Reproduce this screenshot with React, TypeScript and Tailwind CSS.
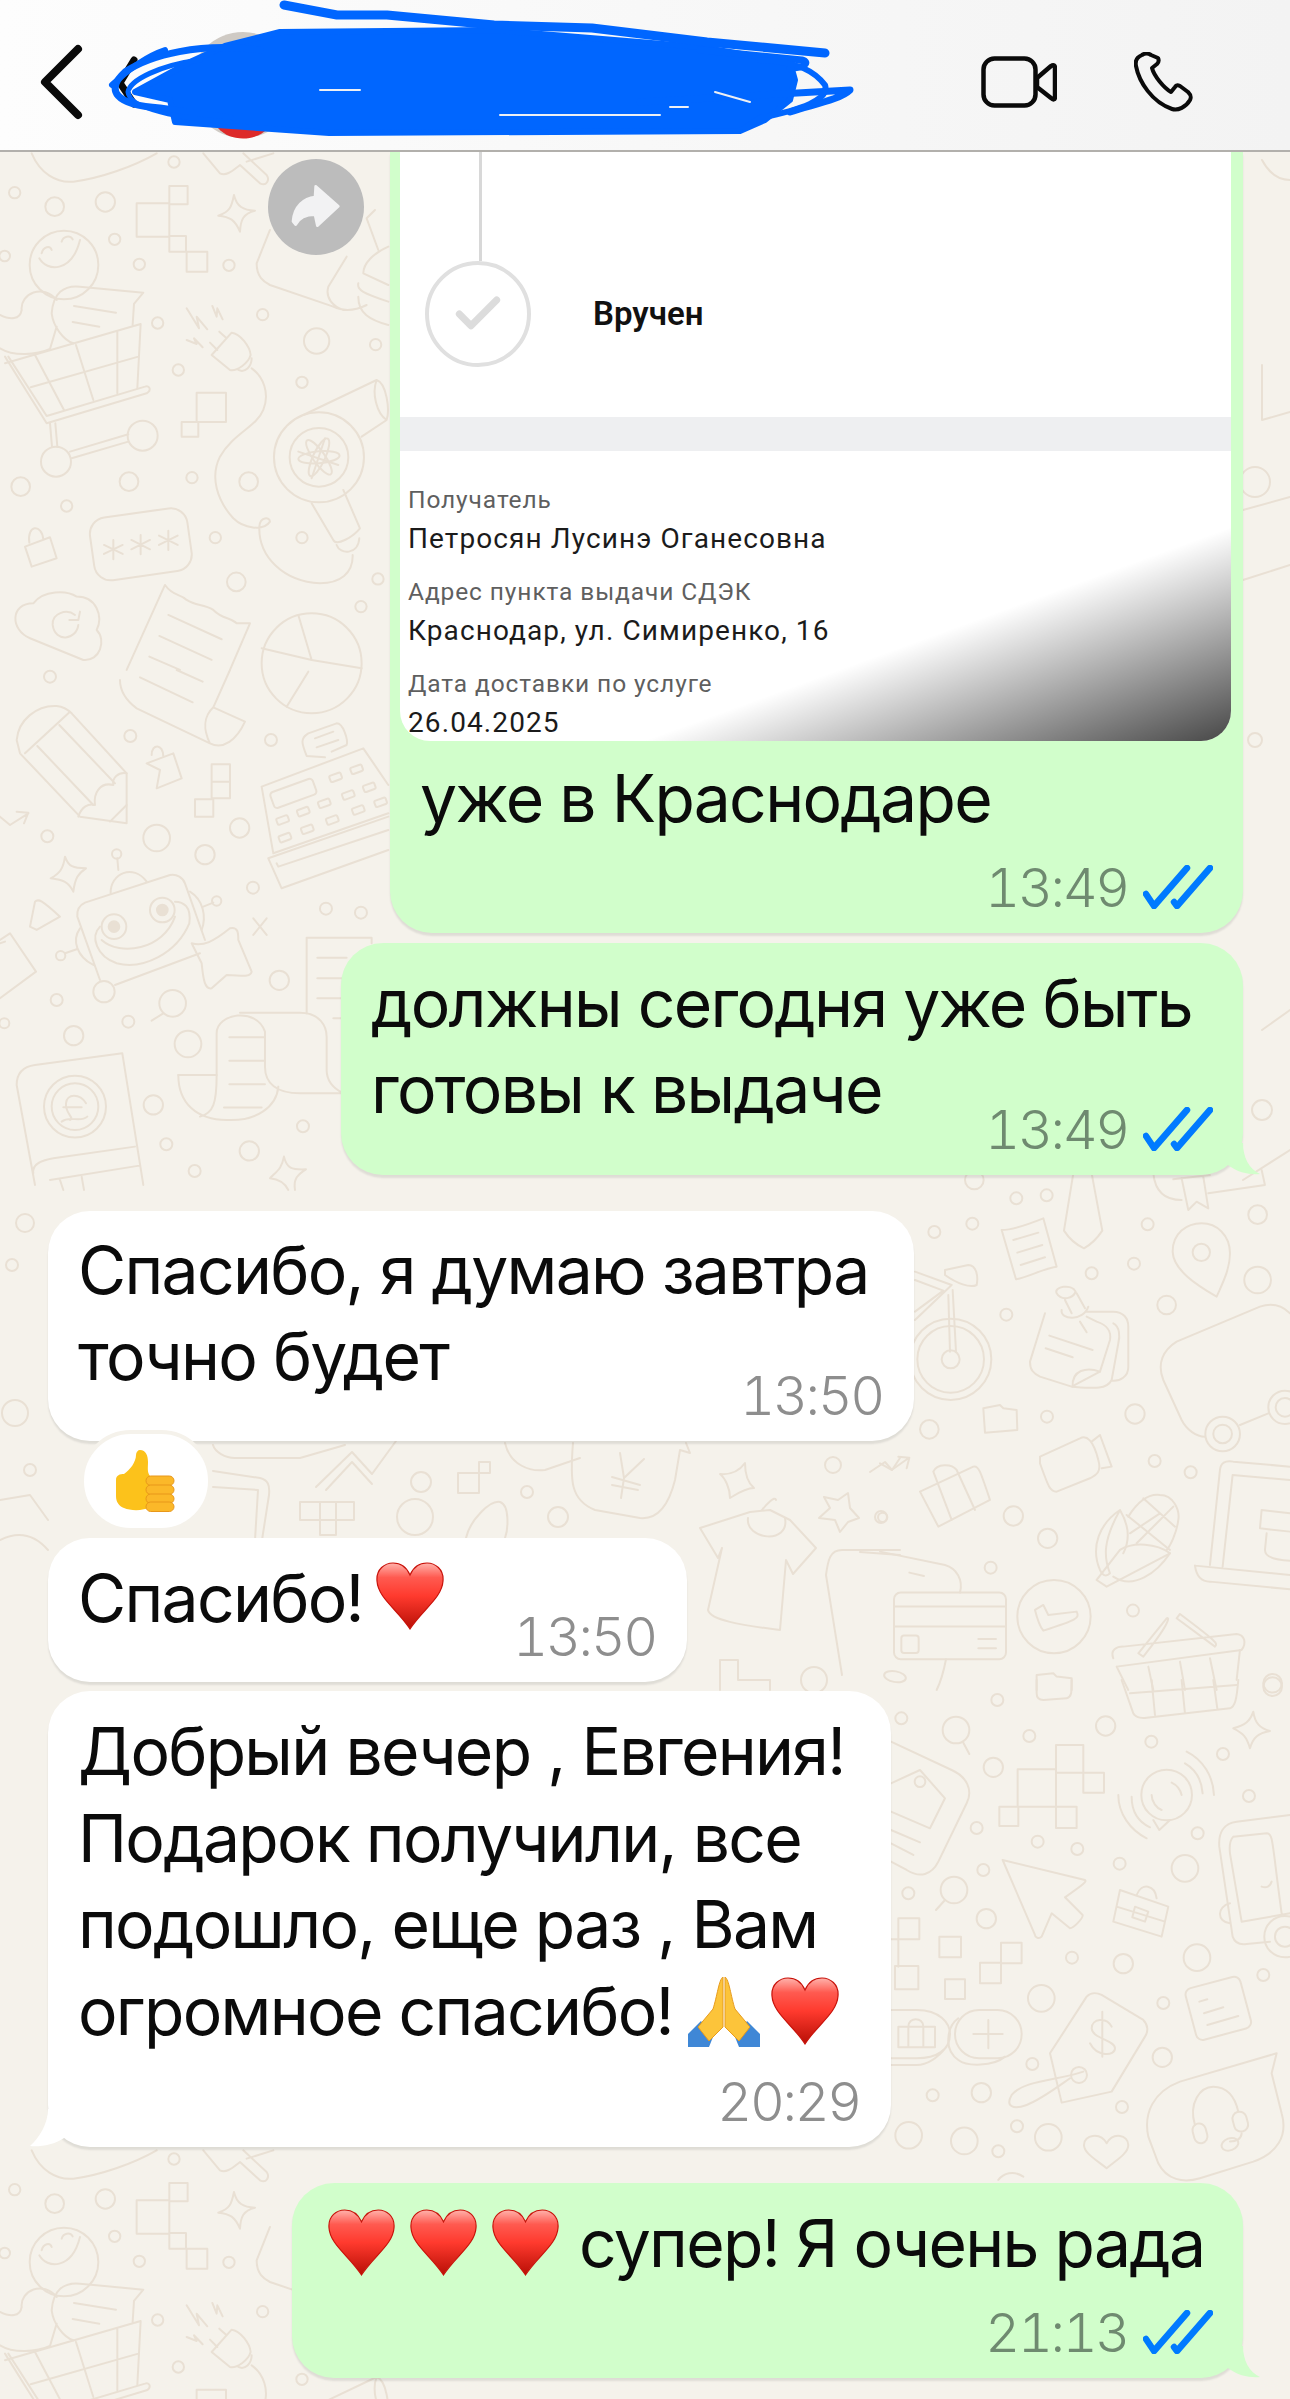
import { Check } from "lucide-react";
import type { ReactNode } from "react";

const GREEN = "bg-[#d1fecb]";

// wallpaper pieces are written in zoomed (3x) coordinates, hence the scale on each group
function Doodles({
  x,
  y,
  circles,
  paths,
  children,
}: {
  x: number;
  y: number;
  circles: number[][];
  paths: string[];
  children?: ReactNode;
}) {
  return (
    <g transform={`translate(${x} ${y}) scale(0.3333)`} strokeWidth={6}>
      {circles.map(([cx, cy, r]) => (
        <circle key={`${cx}-${cy}`} cx={cx} cy={cy} r={r} />
      ))}
      {paths.map((d) => (
        <path key={d} d={d} />
      ))}
      {children}
    </g>
  );
}

function Wallpaper() {
  return (
    <svg
      className="absolute inset-0"
      width={1290}
      height={2399}
      viewBox="0 0 1290 2399"
      fill="none"
      stroke="#e9e0d4"
      strokeLinecap="round"
      strokeLinejoin="round"
    >
      <g id="tile-top">
        <Doodles
          x={0}
          y={150}
          circles={[
            [44, 128, 17], [164, 170, 28], [316, 156, 29], [344, 268, 17], [418, 343, 17], [522, 36, 17],
            [687, 346, 17], [473, 519, 17], [788, 494, 17], [950, 573, 38], [1127, 584, 17], [535, 660, 17],
            [906, 697, 17], [62, 1010, 28], [387, 995, 28], [576, 983, 17], [746, 995, 28], [200, 1068, 17],
            [646, 1163, 17], [906, 1163, 17], [709, 1296, 28], [1134, 1287, 17], [1083, 1370, 17], [14, 318, 16],
            [192, 345, 103], [168, 935, 45], [428, 857, 45], [957, 922, 135], [957, 922, 88], [935, 1540, 150],
          ]}
          paths={[
            "M410 160H508V260H410Z M508 108H563V163H508Z M508 258H558V305H508Z M560 305H622V365H560Z",
            "M702 135 C710 170 730 180 765 182 C730 190 722 210 720 245 C705 210 690 200 655 197 C690 185 695 170 702 135Z",
            "M118 325 C140 365 215 370 240 270 M125 310 C130 290 150 285 155 300 M185 275 C190 258 210 255 218 268",
            "M0 495 C30 510 60 510 65 480 C60 430 130 400 170 450",
            "M155 490 C160 430 190 405 240 410 L430 428 L402 462 L398 525 M155 490 C160 530 190 570 220 580 M170 530 L150 597 C110 615 40 620 0 595",
            "M222 468 L348 488 M218 516 L298 530",
            "M15 640 L422 522 L412 715 M92 712 L415 620 M105 615 L192 780 M228 585 L280 750 M352 545 L352 730",
            "M15 620 L140 820 L440 730 C455 722 450 705 435 710 L140 798 L25 620",
            "M150 820 L156 890 M166 820 L172 890 M210 905 L385 853 M215 925 L385 875",
            "M635 615 L695 548 C720 550 750 590 752 615 C745 640 710 665 690 660 Z M630 578 L652 600 M658 545 L680 565 M715 660 C735 670 755 650 755 625",
            "M755 655 C790 680 810 730 790 780 C770 830 700 850 660 920 C630 980 650 1050 700 1105 C730 1135 790 1145 810 1115 C810 1100 780 1100 778 1130 C775 1220 850 1295 960 1300 C1020 1300 1060 1270 1058 1215",
            "M560 475 L597 535 L590 500 L622 538 M637 468 L650 500 L652 475 L668 508 M560 570 L590 582 L582 565 L608 592",
            "M590 728H678V816H590Z M545 816H595V860H545Z",
            "M895 905 L1015 945 M975 865 L935 985",
            "M910 795 L1130 690 C1160 700 1170 780 1160 810 L1085 860 M1130 690 C1115 730 1130 790 1160 810",
            "M935 1060 L1000 1170 C1010 1190 1060 1160 1080 1135 L1030 1020 M1010 1185 C1020 1215 1075 1215 1078 1165",
            "M810 240 L770 340 C770 380 790 395 810 405 L1000 470 C1030 485 1060 485 1100 465 M1125 180 L1100 205 L1135 300 M1040 320 L985 410 C975 445 1000 470 1030 480",
            "M1165 290 C1120 310 1090 340 1090 370 L1165 405 M1075 400 C1070 420 1090 430 1165 455 M1075 440 C1075 490 1110 510 1165 525",
            "M95 10 C120 70 170 100 220 95 C300 85 400 50 470 10 M610 10 L660 70 C680 80 700 60 720 45 L780 100 C800 110 810 90 800 75 L730 10 M820 10 L740 35",
            "M75 1190 L150 1162 L170 1225 L95 1250 Z M88 1178 C80 1125 125 1120 130 1168",
            "M340 1170 V1228 M312 1185 L368 1212 M312 1212 L368 1185 M422 1155 V1213 M394 1170 L450 1198 M394 1198 L450 1170 M505 1142 V1200 M477 1157 L533 1185 M477 1185 L533 1157",
            "M90 1465 C30 1440 30 1360 100 1360 C130 1320 200 1320 230 1340 C290 1340 310 1400 290 1440 C320 1470 300 1535 250 1530 Z M235 1425 C230 1470 165 1480 158 1425 C155 1390 200 1375 225 1395 M240 1385 L235 1410 L208 1410",
            "M495 1305 C520 1340 540 1330 560 1350 C590 1370 610 1360 640 1380 C670 1410 690 1400 710 1420 L750 1420 L690 1560 M495 1305 L380 1560 M505 1395 L665 1468 M478 1458 L635 1530 M448 1520 L540 1560",
            "M785 1495 L935 1530 L895 1395 M935 1530 L1085 1555",
          ]}
        >
          <rect x={275} y={1088} width={295} height={190} rx={50} transform="rotate(-8 422 1183)" />
          <ellipse cx={957} cy={922} rx={18} ry={62} transform="rotate(25 957 922)" />
          <ellipse cx={957} cy={922} rx={18} ry={62} transform="rotate(85 957 922)" />
          <ellipse cx={957} cy={922} rx={18} ry={62} transform="rotate(-35 957 922)" />
        </Doodles>
      </g>
      <use href="#tile-top" y={1997} />

      <Doodles
        x={0}
        y={670}
        circles={[
          [150, 20, 18], [391, 198, 18], [813, 210, 18], [142, 499, 18], [470, 504, 40], [719, 474, 29],
          [615, 554, 29], [759, 653, 18], [350, 552, 14], [978, 716, 18], [1083, 728, 18], [838, 931, 29],
          [170, 990, 18], [385, 1055, 18], [13, 1060, 15], [221, 1097, 29], [564, 1122, 40], [460, 1305, 29],
          [499, 1423, 18], [584, 1503, 18], [748, 1443, 29], [909, 1369, 18], [342, 770, 37], [487, 720, 37],
          [650, 693, 14], [182, 857, 14], [312, 965, 32], [518, 1000, 40], [225, 1310, 93], [225, 1310, 70],
        ]}
        paths={[
          "M360 30 C360 70 390 100 410 115 L630 220 C670 240 710 210 735 155 L640 112 C610 140 610 180 630 220 M690 0 L640 112 M420 22 L578 97 M530 0 L608 35",
          "M925 5 L860 110",
          "M50 210 C55 150 110 105 170 108 C190 110 205 120 215 130 L380 310 L380 460 L240 440 L60 250 Z M75 250 L210 125 M112 228 L280 405 M178 165 L345 340",
          "M235 440 C245 410 265 400 285 405 C280 370 300 335 340 345 C335 325 355 305 380 310 M330 455 L380 405",
          "M0 440 L30 465 L85 430 M50 425 L85 428 L72 460",
          "M440 280 L520 250 L545 325 L470 355 L480 300 Z M455 255 C455 220 490 220 490 260",
          "M635 283H690V385H635Z M635 335H690 M585 388H640V440H585Z",
          "M785 350 L1090 235 L1165 345 M785 350 L820 550 L1165 430 M805 565 L845 655 L1165 540 M805 565 L1165 440 M830 580 L835 590 L1165 480",
          "M975 262 L920 258 C905 220 900 205 925 190 L1010 160 C1030 160 1045 210 1040 225 L995 245 M945 205 L1000 185 M950 232 L1015 210",
          "M232 740 C230 715 240 705 255 698 L510 615 C530 610 550 625 555 640 L615 810 M600 850 L345 945 M300 930 L232 740",
          "M300 770 C270 800 290 860 350 880 C430 900 530 850 568 760 C575 710 550 695 525 695 M305 810 C360 860 490 840 525 740",
          "M332 670 C330 610 400 580 440 635 M355 600 L352 565 M610 710 L640 698 M195 850 L230 838 M570 665 C610 690 620 740 605 780 M240 775 C215 810 230 860 280 885",
          "M575 820 C610 830 640 815 690 775 C715 770 715 790 715 810 L755 905 C750 925 720 915 680 915 L635 955 C615 960 610 930 605 880 Z",
          "M195 560 C205 590 220 595 258 595 C235 610 225 625 220 665 C205 635 190 630 152 625 C180 610 190 595 195 560Z",
          "M90 770 L105 695 C115 685 125 690 180 740 L110 780 Z",
          "M760 745 L800 795 M800 745 L760 795",
          "M0 810 L30 790 L108 905 L0 985 M0 820 L15 815",
          "M490 1030 L455 1052",
          "M920 1030 V803 H1115 V820 M952 863H1040 M952 925H1040 M952 985H1040 M1000 1045H1040",
          "M535 1215 H650 V1090 C650 1030 770 1010 795 1085 V1190 C795 1240 830 1270 900 1270 H1030 M720 1028 H900 C960 1028 980 1070 980 1100 V1200 C980 1240 1010 1260 1030 1270",
          "M535 1215 C535 1300 590 1350 680 1350 C770 1355 830 1310 835 1250 M650 1215 C650 1300 640 1330 600 1340 M688 1102H795 M688 1172H795 M688 1243H795 M672 1313H785",
          "M50 1245 C50 1210 70 1190 105 1185 L367 1150 L430 1545 M105 1545 L50 1245 M100 1510 C95 1480 130 1470 160 1465 L405 1430 M150 1530 L418 1487 M180 1530 L190 1560 M245 1520 L252 1560",
          "M258 1300 C240 1270 200 1270 198 1300 C195 1330 225 1345 210 1350 M190 1312H245 M185 1355 C210 1335 240 1360 262 1340",
          "M852 1460 C860 1495 875 1500 918 1498 C890 1515 880 1530 885 1560 M852 1460 C845 1495 835 1500 810 1525 C840 1528 855 1540 865 1560",
        ]}
      >
        <rect x={812} y={345} width={135} height={50} rx={10} transform="rotate(-20 880 368)" />
        {[[848, 450], [910, 425], [973, 400], [1045, 375], [1108, 352], [1007, 322], [1070, 298], [855, 503], [922, 478], [997, 450], [1075, 420], [1142, 397]].map(([cx, cy]) => (
          <rect key={`${cx}-${cy}`} x={cx - 18} y={cy - 10} width={36} height={20} rx={5} transform={`rotate(-20 ${cx} ${cy})`} />
        ))}
        <circle cx={342} cy={770} r={16} fill="#e9e0d4" />
        <circle cx={487} cy={720} r={16} fill="#e9e0d4" />
      </Doodles>

      <Doodles
        x={880}
        y={1170}
        circles={[
          [283, 30, 28], [409, 85, 18], [500, 76, 18], [163, 186, 18], [277, 161, 18], [803, 163, 18], [1133, 134, 28],
          [635, 310, 18], [762, 281, 18], [379, 434, 18], [860, 405, 28], [1133, 330, 40], [964, 247, 26], [148, 778, 28],
          [501, 740, 18], [765, 732, 29], [824, 873, 18], [932, 907, 18], [400, 1038, 29], [503, 1105, 29], [332, 1193, 18],
          [759, 1322, 18], [8, 1042, 14], [1178, 1540, 28], [212, 568, 122], [212, 568, 100], [212, 568, 27], [1028, 792, 52],
          [1028, 792, 28], [1215, 712, 50], [1215, 712, 28], [522, 1340, 110],
        ]}
        paths={[
          "M365 180 C390 180 440 165 490 145 L530 290 C490 295 450 320 408 328 Z M400 210 L475 188 M412 248 L487 225 M422 285 L495 262",
          "M580 10 L552 182 C570 210 590 225 612 235 C640 220 655 200 667 182 L635 10",
          "M820 10 C825 60 850 90 905 90 M905 25 L925 120 L950 95 L985 115 L970 20 M880 28 L990 15 M985 70 L1155 45 L1145 0",
          "M1010 380 C950 345 880 300 878 245 C878 190 920 160 965 160 C1010 160 1050 195 1050 250 C1050 300 1025 345 1010 380Z",
          "M105 305 L215 345 L105 450 M105 330 L190 362 L105 425 M195 300 L265 285 C290 285 295 320 290 345 C270 355 230 340 195 315Z M205 375 L210 545 M218 360 L228 545",
          "M495 430 L450 575 C450 600 460 610 480 620 L575 650 L660 605 L690 510 C695 480 680 465 650 455 L620 440 M620 425 H700 C730 425 745 445 745 470 V590 C745 620 720 635 695 632 M700 460 C720 470 720 500 715 520 L695 630 C680 660 640 655 575 650",
          "M508 497 L638 540 M497 535 L578 562 M530 370 C520 350 575 340 587 365 C580 385 545 395 530 370Z M555 390 L575 430 M590 370 L615 415 M545 420 C540 450 610 455 625 410 M600 455 L620 487 M578 650 C575 600 620 590 660 605",
          "M310 715 L360 705 L370 715 L410 720 L412 780 L315 788Z",
          "M1230 430 C1200 400 1170 400 1140 410 L890 515 C850 540 830 580 850 630 L905 750 C920 780 950 800 975 800 M1080 765 L1165 730",
          "M480 860 L600 805 C620 795 640 810 655 870 C665 905 650 915 630 925 L530 965 C510 965 505 950 480 880Z M635 815 L660 795 L695 890 L665 895",
          "M120 965 L280 890 C295 885 300 900 330 990 L175 1070 Z M160 905 C170 880 215 880 230 900 L285 1020 M160 905 L215 1050",
          "M650 1230 L680 1250 L870 1150 C830 1120 760 1115 720 1140 L650 1230 Z M745 1040 C770 1000 800 970 840 975 C880 975 900 1020 895 1050 C890 1090 870 1130 860 1140",
          "M740 1035 L870 1140 M790 985 L885 1070 M750 1090 L840 1030 M770 1120 L880 1010 M720 1020 C660 1060 630 1130 660 1200 C670 1220 680 1220 690 1210 C670 1160 670 1110 720 1020 C750 1070 750 1110 730 1150 M700 1220 C760 1260 830 1210 870 1150",
          "M990 1185 L1020 900 C1022 880 1035 870 1060 875 L1230 890 M1028 1190 L1058 915 L1230 930 M945 1187 L1230 1215 M945 1187 C950 1225 970 1235 990 1235 L1230 1258",
          "M1145 1020 L1230 1030 M1145 1020 L1140 1075 L1230 1085 M1160 1090 L1155 1140 C1155 1160 1180 1170 1230 1172",
          "M42 1310H378 M42 1370H378 M295 1407H348 M295 1435H348 M0 1145 L195 1185 C230 1195 250 1230 240 1268 M88 1208 L132 1218 M198 1468 C190 1510 180 1540 170 1560",
          "M465 1320 L490 1305 L505 1335 L590 1325 C600 1345 590 1350 490 1382 C480 1370 470 1340 465 1320Z",
          "M700 1465 C690 1440 710 1430 730 1430 L1070 1392 C1095 1395 1100 1420 1085 1440 L710 1490 M710 1490 L745 1560 M775 1450 L860 1345 C870 1340 870 1360 790 1460 Z M890 1345 L1005 1430 C1015 1420 1010 1415 900 1332 Z",
          "M805 1490 L820 1560 M900 1475 L915 1560 M990 1465 L1010 1560 M1080 1440 L1070 1530",
          "M0 880 L35 900 L85 865 M55 860 L88 863 L80 895 M470 1560 V1515 L520 1510 L530 1520 L575 1525 V1560",
        ]}
      >
        <rect x={42} y={1268} width={336} height={200} rx={20} />
        <rect x={64} y={1397} width={52} height={52} rx={8} />
        <ellipse cx={45} cy={1520} rx={33} ry={16} transform="rotate(10 45 1520)" />
      </Doodles>

      <Doodles
        x={880}
        y={1680}
        circles={[
          [352, 60, 18], [64, 115, 18], [677, 138, 29], [448, 168, 18], [814, 185, 18], [1178, 20, 28], [1029, 222, 18],
          [340, 262, 29], [1107, 348, 18], [290, 444, 18], [953, 460, 18], [473, 485, 18], [592, 507, 18], [915, 565, 40],
          [310, 570, 18], [719, 551, 18], [85, 640, 18], [319, 716, 29], [576, 833, 18], [730, 851, 29], [951, 833, 40],
          [1150, 885, 18], [484, 955, 40], [850, 969, 18], [847, 1132, 29], [457, 1152, 18], [158, 1246, 18], [304, 1238, 29],
          [726, 1281, 18], [411, 1339, 18], [253, 1383, 40], [505, 1372, 40], [355, 1414, 18], [86, 1366, 40], [228, 150, 40],
          [222, 630, 40], [860, 345, 76], [597, 1185, 24], [1215, 770, 62], [1215, 770, 30], [120, 305, 16],
        ]}
        paths={[
          "M725 0 L760 100 C770 115 790 115 800 113 L1050 85 C1065 80 1070 60 1075 0 M750 40 L1070 15 M815 0 L825 105 M905 0 L915 100 M1000 0 L1012 85",
          "M470 0 V40 C470 55 480 60 490 60 L560 55 C575 50 575 40 575 0",
          "M250 188 L268 222 M195 660 L168 690",
          "M33 185 L215 270 C260 290 280 330 260 370 L175 545 C155 585 120 595 80 570 L33 545 M33 310 L120 270 L195 355 L150 445 L33 395 M33 450 L120 487 M33 490 L100 525",
          "M413 268H528V380H413Z M528 195H610V278H528Z M610 278H672V338H610Z M358 380H415V438H358Z M528 380H590V444H528Z",
          "M820 420 L838 450 L870 420 M920 215 C970 240 1000 290 1002 345 M915 250 C950 270 965 300 968 340 M715 345 C715 400 750 450 800 475 M755 350 C755 395 775 425 810 442 M815 345 C815 365 830 385 845 390 M905 345 C900 325 890 315 875 308",
          "M1120 95 C1125 130 1140 145 1170 153 C1135 160 1120 170 1110 205 C1100 170 1090 160 1060 145 C1095 135 1110 125 1120 95Z",
          "M368 540 L615 600 C620 605 615 610 555 652 L608 705 C610 715 580 745 570 745 L515 700 L485 770 C475 780 465 770 465 765Z",
          "M720 630 L865 680 L845 770 L700 725Z M770 645 C785 605 825 615 830 655 M710 680 L855 725 M765 680 L805 695 L795 725 L757 712Z",
          "M1230 405 L1070 425 C1030 430 1015 460 1018 500 L1058 770 C1065 790 1080 795 1100 792 L1170 785 M1060 470 L1160 460 C1180 460 1175 480 1205 700 M1060 470 C1050 480 1048 500 1050 520 L1085 725 L1230 700 M1145 620 C1160 625 1170 620 1175 605 M1050 670 C1010 680 1010 725 1050 730",
          "M55 715H118V778H55Z M33 778H55 M55 778 V860 M45 858H115V928H45Z M178 770H243V832H178Z M300 848H363V910H300Z M363 788H425V850H363Z M195 898H255V957H195Z",
          "M235 1015 C200 1040 190 1110 235 1140 C260 1160 340 1160 375 1130 M280 1062H368 M325 1020V1105",
          "M33 990 H110 C180 990 210 1030 210 1062 C210 1110 170 1135 110 1135 H33 M33 1155 H110 C150 1155 180 1125 200 1100 M55 1040H165V1102H55Z M85 1040V1102 M130 1040V1102 M85 1040 C85 1010 130 1010 130 1040",
          "M510 1120 L620 950 C635 935 655 940 665 945 L790 1020 C805 1035 805 1055 795 1070 L695 1235 L545 1268 Z",
          "M610 1175 C540 1200 430 1200 395 1245 C375 1280 400 1290 440 1275 C480 1260 520 1230 570 1195",
          "M695 1040 C680 1010 635 1015 635 1045 C635 1075 705 1080 705 1105 C705 1130 650 1130 630 1090 M667 995 V1130",
          "M958 965 L982 958 M972 1000 L1030 982 M982 1035 L1075 1008",
          "M1190 1120 L900 1205 C820 1235 790 1300 805 1370 L835 1450 C860 1500 910 1510 960 1495 L1120 1445 C1190 1420 1225 1370 1205 1300 L1175 1180 L1190 1120Z",
          "M945 1335 C925 1270 960 1220 1000 1220 C1040 1220 1065 1250 1075 1295 M1085 1360 C1085 1375 1070 1385 1050 1385",
          "M680 1465 C650 1440 612 1420 612 1395 C612 1365 660 1355 680 1390 C700 1355 745 1365 745 1395 C745 1420 710 1440 680 1465Z",
          "M355 1500 C370 1480 400 1470 430 1490",
        ]}
      >
        <rect x={225} y={990} width={200} height={145} rx={72} />
        <rect x={930} y={905} width={170} height={160} rx={20} transform="rotate(-15 1015 985)" />
        <rect x={940} y={1330} width={40} height={60} rx={20} transform="rotate(-15 960 1360)" />
        <rect x={1060} y={1295} width={42} height={60} rx={20} transform="rotate(-15 1081 1325)" />
        <ellipse cx={1050} cy={1393} rx={26} ry={18} transform="rotate(-20 1050 1393)" />
      </Doodles>

      {/* strip between the white bubbles, real coordinates */}
      <g strokeWidth={2}>
        <circle cx={421} cy={1482} r={10} />
        <circle cx={527} cy={1492} r={6} />
        <circle cx={415} cy={1517} r={18} />
        <circle cx={558} cy={1517} r={10} />
        <circle cx={833} cy={1465} r={8} />
        <circle cx={881} cy={1517} r={6} />
        <circle cx={814} cy={1680} r={13} />
        <circle cx={25} cy={1223} r={9} />
        <circle cx={12} cy={1265} r={6} />
        <circle cx={15} cy={1413} r={13} />
        <circle cx={30} cy={1470} r={6} />
        <circle cx={1255} cy={482} r={15} />
        <circle cx={1255} cy={740} r={7} />
        <circle cx={1262} cy={1110} r={10} />
        <path d="M213 1445 C215 1452 225 1458 235 1458 L300 1458 L345 1445" />
        <path d="M316 1487 L352 1452 L372 1474 L396 1441 M326 1490 L352 1462 L372 1484" />
        <path d="M458 1473H479V1493H458Z M479 1462H490V1473H479Z" />
        <path d="M300 1502H354V1520H300Z M320 1502V1535H336V1502" />
        <path d="M466 1538 C470 1520 490 1500 500 1502 C510 1505 508 1530 505 1538" />
        <path d="M573 1443 C570 1480 570 1500 595 1510 L640 1518 C660 1520 670 1500 675 1480 L680 1450 L690 1453 L686 1443" />
        <path d="M620 1453 L624 1478 L644 1459 M612 1477 L640 1485 M612 1485 L638 1490 M624 1478 L621 1498" />
        <path d="M505 1443 C510 1465 530 1472 545 1470 L580 1458" />
        <path d="M745 1463 C745 1475 748 1483 754 1488 C745 1488 735 1495 730 1498 C730 1488 725 1478 720 1474 C732 1475 740 1470 745 1463Z" />
        <path d="M870 1472 L885 1462 L892 1470 L900 1458" />
        <path d="M824 1497 L838 1500 L848 1493 L850 1508 L859 1518 L848 1522 L840 1532 L835 1520 L819 1518 L830 1508 Z" />
        <path d="M700 1528 L718 1558 L722 1548 L708 1610 C710 1620 740 1625 780 1630 L786 1560 L793 1574 L816 1548 L790 1520 L770 1510 L750 1512 Z" />
        <path d="M748 1518 C745 1540 790 1545 785 1518 M762 1510 C766 1505 775 1495 776 1500" />
        <path d="M900 1550 L842 1550 C830 1550 828 1560 826 1575 L842 1675 M900 1555 L860 1552" />
        <path d="M720 1690V1660H738V1680H770V1690" />
        <path d="M213 1471 L260 1478 C268 1480 270 1485 269 1495 L262 1540 M213 1487 L258 1490 L255 1540" />
        <path d="M1243 510 L1290 497 M1243 580 L1290 565 M1243 1180 L1290 1150" />
        <path d="M1262 160 C1270 175 1280 180 1290 180 M1262 365 V420 L1290 412 M1262 1030 L1290 1010" />
        <path d="M0 1500 L30 1495 L48 1520 M0 1540 C20 1530 35 1535 48 1550" />
      </g>
    </svg>
  );
}

function Heart({ className }: { className: string }) {
  return (
    <svg className={className} viewBox="0 0 68 68">
      <defs>
        <linearGradient id="heart-fill" x1="0" y1="0" x2="0" y2="1">
          <stop offset="0" stopColor="#ffb3ac" />
          <stop offset="0.22" stopColor="#ff5a50" />
          <stop offset="0.5" stopColor="#ff3a2e" />
          <stop offset="1" stopColor="#b80f06" />
        </linearGradient>
      </defs>
      <path
        d="M34 67 C22 48 2 36 1 19 C0 7 9 1 17 1 C25 1 31 6 34 13 C37 6 43 1 51 1 C59 1 68 7 67 19 C66 36 46 48 34 67Z"
        fill="url(#heart-fill)"
        stroke="#c8120a"
        strokeWidth={1.2}
      />
    </svg>
  );
}

function Pray() {
  return (
    <svg className="inline-block w-[72px] h-[70px] align-[-12px] ml-[15px]" viewBox="0 0 72 70">
      <path d="M0 70 V57 L13 44 L25 60 L21 70Z" fill="#3f87d6" />
      <path d="M72 70 V57 L59 44 L47 60 L51 70Z" fill="#3f87d6" />
      <path d="M35 0 C31 2 29 20 25 32 L10 50 L21 64 L35 50Z" fill="#fcc43a" stroke="#e79b1d" strokeWidth={1} />
      <path d="M37 0 C41 2 43 20 47 32 L62 50 L51 64 L37 50Z" fill="#fcc43a" stroke="#e79b1d" strokeWidth={1} />
    </svg>
  );
}

function ThumbsUp() {
  return (
    <svg className="w-[60px] h-[62px]" viewBox="0 0 60 62">
      <path
        d="M24 0 C30 0 32 6 32 12 C32 18 31 22 34 26 L35 57 C27 61 15 61 8 58 C3 56 0 52 0 46 L0 30 C0 25 4 24 8 24 C14 20 20 12 20 5 C20 2 22 0 24 0Z"
        fill="#fcc21b"
      />
      {[26, 35, 44, 52].map((y) => (
        <rect key={y} x={30} y={y} width={28} height={9.5} rx={4.7} fill="#fbb829" stroke="#e8971a" strokeWidth={1} />
      ))}
    </svg>
  );
}

function DoubleCheck() {
  return (
    <svg className="w-[70px] h-[44px] ml-[15px] -mt-[2px]" viewBox="0 0 70 44" fill="none" stroke="#007aff" strokeWidth={6.5} strokeLinecap="round" strokeLinejoin="round">
      <path d="M3 29 L11 41 L44 3" />
      <path d="M31 37 L34 41 L67 3" />
    </svg>
  );
}

function Meta({ time, read, className }: { time: string; read?: boolean; className: string }) {
  return (
    <div className={`flex justify-end items-center h-[48px] ${className}`}>
      <span className={`text-[54px] leading-[48px] font-light tabular-nums tracking-[-2.3px] ${read ? "text-[#6f8a70]" : "text-[#8e8e8e]"}`}>{time}</span>
      {read && <DoubleCheck />}
    </div>
  );
}

function Bubble({ out, width, tail, children }: { out?: boolean; width: string; tail?: boolean; children: ReactNode }) {
  return (
    <div
      className={`relative rounded-[42px] shadow-[0_3px_2px_rgba(0,0,0,0.09)] ${width} ${
        out ? `${GREEN} pl-[30px] pr-[30px]` : "bg-white pl-[30px] pr-[31px]"
      } pb-[21px]`}
    >
      {children}
      {tail && out && (
        <svg className="absolute -right-[17px] bottom-0 w-[37px] h-[32px]" viewBox="0 0 37 32">
          <path d="M20 0 C20 14 26 26 37 31 C28 32 15 30 5 22 L0 0Z" fill="#d1fecb" />
        </svg>
      )}
      {tail && !out && (
        <svg className="absolute -left-[18px] bottom-0 w-[46px] h-[38px]" viewBox="0 0 46 38">
          <path d="M18 0 C18 14 10 28 0 37 C10 38 24 36 34 29 L46 0Z" fill="#ffffff" />
        </svg>
      )}
    </div>
  );
}

function Line({ children }: { children: ReactNode }) {
  return <div className="text-[66px] leading-[86.5px] text-[#0b0b0b] whitespace-nowrap tracking-[-1.7px]">{children}</div>;
}

function Detail({ label, value, className }: { label: string; value: string; className: string }) {
  return (
    <div className={`font-['Roboto',sans-serif] ${className}`}>
      <div className="text-[24.5px] leading-[28px] text-[#5f5f5f] tracking-[0.9px]">{label}</div>
      <div className="text-[28px] leading-[32px] mt-[9px] text-[#1b1b1b] tracking-[1.1px]">{value}</div>
    </div>
  );
}

function Header() {
  return (
    <header className="relative z-10 h-[152px] shrink-0 pt-[13px] bg-gradient-to-r from-[#fdfdfd] to-[#f3f3f3] border-b-2 border-[#b2b0ac] flex items-center">
      <svg className="ml-[37px] w-[48px] h-[76px]" viewBox="0 0 48 76" fill="none" stroke="#0a0a0a" strokeWidth={8} strokeLinecap="round" strokeLinejoin="round">
        <path d="M41 5 L8 38 L41 71" />
      </svg>
      {/* avatar and contact name are scribbled over in blue */}
      <svg className="absolute left-0 top-0" width={900} height={150} viewBox="0 0 900 150" fill="none" stroke="#0066ff" strokeLinecap="round" strokeLinejoin="round">
        <path d="M134 60 L120 83 L134 104" stroke="#0a0a0a" strokeWidth={7} />
        <circle cx={243} cy={85} r={53} fill="#cfcac4" stroke="none" />
        <path d="M218 128 C230 142 256 142 268 128 L268 118 L218 118Z" fill="#dd2a2a" stroke="none" />
        <path
          d="M190 62 L225 46 L280 32 L494 30 L700 47 L790 62 L795 80 L790 100 L765 120 L740 131 L329 133 L175 122 L170 100 L135 92 Z"
          fill="#0066ff"
          strokeWidth={6}
        />
        <path d="M284 5 L337 15 L387 15 L494 25 L592 28 L707 42 L825 53" strokeWidth={9} />
        <path d="M260 50 C200 42 150 55 125 72 C105 90 115 105 160 108 L230 118" strokeWidth={7} />
        <path d="M200 60 C160 65 130 80 128 92 C130 110 180 118 230 122" strokeWidth={5} />
        <path d="M165 50 C150 55 130 68 112 85" strokeWidth={6} />
        <path d="M700 50 L802 60 C810 62 805 68 790 68" strokeWidth={7} />
        <path d="M760 60 C800 62 815 72 825 85 C830 100 800 110 760 118 L745 128" strokeWidth={6} />
        <path d="M640 102 L850 90 C840 100 810 105 790 112" strokeWidth={7} />
        <path d="M500 115 H660 M670 107 H688 M715 92 L750 102 M320 90 H360" stroke="#eef0f4" strokeWidth={2} />
      </svg>
      <div className="ml-auto mr-[96px] flex items-center gap-[77px]">
        <svg className="w-[76px] h-[52px]" viewBox="0 0 76 52" fill="none" stroke="#0a0a0a" strokeWidth={4.5} strokeLinejoin="round">
          <rect x={2.5} y={2.5} width={52} height={47} rx={11} />
          <path d="M56 22 L70 10 C73 8 74 10 74 12 V41 C74 44 72 44 70 42 L56 31Z" />
        </svg>
        <svg className="w-[60px] h-[60px]" viewBox="0 0 60 60" fill="none" stroke="#0a0a0a" strokeWidth={4} strokeLinejoin="round">
          <path d="M8 3 C3 5 1 9 2 14 C5 30 18 50 38 57 C44 59 52 55 56 48 C58 44 56 42 54 40 L46 34 C44 33 42 33 41 35 L37 40 C30 36 20 24 18 16 L23 12 C25 10 25 8 24 6 L17 3 C14 1 11 1 8 3Z" />
        </svg>
      </div>
    </header>
  );
}

export default function App() {
  return (
    <div className="relative w-[1290px] h-[2399px] overflow-hidden bg-[#f5f2eb] font-['Inter',sans-serif] flex flex-col">
      <Wallpaper />
      <Header />

      <main className="relative flex-1 flex flex-col pl-[48px] pr-[47px]">
        {/* forwarded photo message, cut off by the header */}
        <div className="flex justify-end items-start gap-[26px]">
          <button className="mt-[7px] w-[96px] h-[96px] rounded-full bg-[#bcbcbc] shrink-0">
            <svg className="w-[96px] h-[96px]" viewBox="0 0 288 288">
              <path d="M143 82 L211 142 L148 200 L141 167 C113 167 93 177 83 197 L75 187 C78 142 108 117 141 114Z" fill="#f2f2f3" stroke="#f2f2f3" strokeWidth={8} strokeLinejoin="round" />
            </svg>
          </button>
          <div className={`w-[853px] rounded-b-[42px] shadow-[0_3px_2px_rgba(0,0,0,0.09)] ${GREEN} pb-[21px]`}>
            <div className="relative mx-[10px] mr-[12px] h-[589px] overflow-hidden rounded-b-[30px] bg-white">
              <div className="ml-[79px] w-[3px] h-[109px] bg-[#d8d8d8]" />
              <div className="flex items-center ml-[25px]">
                <div className="w-[106px] h-[106px] rounded-full border-[4px] border-[#e0e0e0] flex items-center justify-center">
                  <Check className="w-[56px] h-[56px] text-[#dcdcdc]" strokeWidth={3} />
                </div>
                <span className="ml-[62px] font-['Roboto',sans-serif] font-semibold text-[33px] text-[#111]">Вручен</span>
              </div>
              <div className="h-[50px]" />
              <div className="h-[34px] bg-[#eeeff1]" />
              <div className="pl-[8px] pt-[35px]">
                <Detail label="Получатель" value="Петросян Лусинэ Оганесовна" className="" />
                <Detail label="Адрес пункта выдачи СДЭК" value="Краснодар, ул. Симиренко, 16" className="mt-[23px]" />
                <Detail label="Дата доставки по услуге" value="26.04.2025" className="mt-[23px]" />
              </div>
              <div className="absolute inset-0 bg-[linear-gradient(160deg,rgba(0,0,0,0)_76%,rgba(0,0,0,0.72)_100%)]" />
            </div>
            <div className="pl-[30px] pr-[30px] pt-[14px]">
              <Line>уже в Краснодаре</Line>
              <Meta time="13:49" read className="mt-[22px]" />
            </div>
          </div>
        </div>

        <div className="mt-[10px] self-end">
          <Bubble out tail width="w-[902px]">
            <div className="pt-[17px]">
              <Line>должны сегодня уже быть</Line>
              <Line>готовы к выдаче</Line>
            </div>
            <Meta time="13:49" read className="-mt-[27px]" />
          </Bubble>
        </div>

        <div className="mt-[36px]">
          <Bubble width="w-[866px]">
            <div className="pt-[16px]">
              <Line>Спасибо, я думаю завтра</Line>
              <Line>точно будет</Line>
            </div>
            <Meta time="13:50" className="-mt-[28px]" />
          </Bubble>
        </div>

        <div className="relative z-10 -mt-[11px] ml-[32px] w-[132px] h-[102px] rounded-full bg-white border-[4px] border-[#f5f2eb] flex items-center justify-center">
          <ThumbsUp />
        </div>

        <div className="mt-[6px]">
          <Bubble width="w-[639px]">
            <div className="pt-[17px]">
              <Line>
                Спасибо!
                <Heart className="inline-block w-[68px] h-[68px] align-[-8px] ml-[13px]" />
              </Line>
            </div>
            <Meta time="13:50" className="-mt-[28px]" />
          </Bubble>
        </div>

        <div className="mt-[9px]">
          <Bubble tail width="w-[843px]">
            <div className="pt-[17px]">
              <Line>Добрый вечер , Евгения!</Line>
              <Line>Подарок получили, все</Line>
              <Line>подошло, еще раз , Вам</Line>
              <Line>
                огромное спасибо!
                <Pray />
                <Heart className="inline-block w-[68px] h-[68px] align-[-10px] ml-[11px]" />
              </Line>
            </div>
            <Meta time="20:29" className="mt-[24px]" />
          </Bubble>
        </div>

        <div className="mt-[36px] self-end">
          <Bubble out tail width="w-[951px]">
            <div className="pt-[17px]">
              <Line>
                <span className="inline-flex gap-[15px] ml-[6px] mr-[20px] align-[-9px]">
                  <Heart className="w-[67px] h-[67px]" />
                  <Heart className="w-[67px] h-[67px]" />
                  <Heart className="w-[67px] h-[67px]" />
                </span>
                супер! Я очень рада
              </Line>
            </div>
            <Meta time="21:13" read className="mt-[22px]" />
          </Bubble>
        </div>
      </main>
    </div>
  );
}
